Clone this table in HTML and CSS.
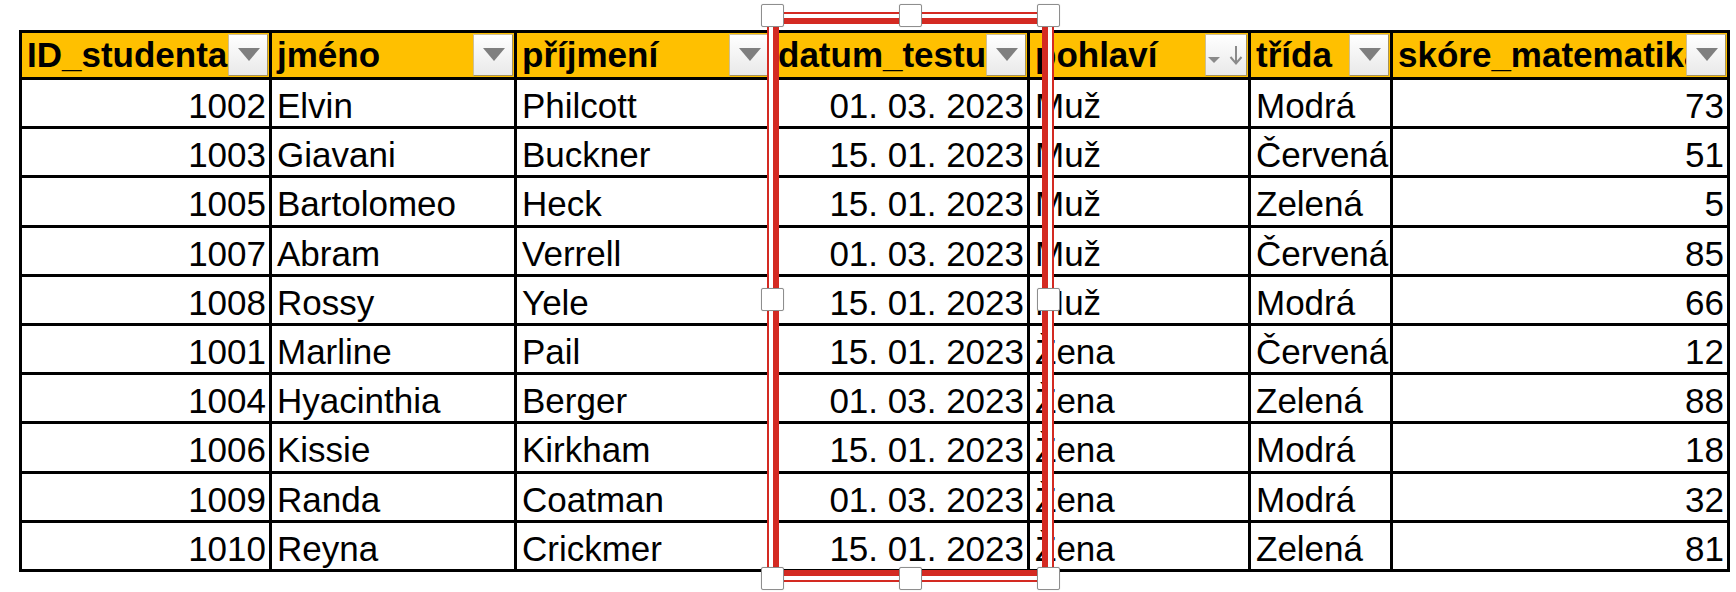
FILE: index.html
```html
<!DOCTYPE html>
<html lang="cs">
<head>
<meta charset="utf-8">
<title>Studenti</title>
<link rel="stylesheet" href="styles.css">
</head>
<body>
<div class="sheet">
  <div class="grid">
    <div class="hc">ID_studenta<span class="btn"><svg viewBox="0 0 40 41" width="40" height="41"><polygon points="10,14 32,14 21,27" fill="#7f7f7f"/></svg></span></div>
    <div class="hc">jméno<span class="btn"><svg viewBox="0 0 40 41" width="40" height="41"><polygon points="10,14 32,14 21,27" fill="#7f7f7f"/></svg></span></div>
    <div class="hc">příjmení<span class="btn"><svg viewBox="0 0 40 41" width="40" height="41"><polygon points="10,14 32,14 21,27" fill="#7f7f7f"/></svg></span></div>
    <div class="hc">datum_testu<span class="btn"><svg viewBox="0 0 40 41" width="40" height="41"><polygon points="10,14 32,14 21,27" fill="#7f7f7f"/></svg></span></div>
    <div class="hc">pohlaví<span class="btn btn-sort"><svg viewBox="0 0 42 41" width="42" height="41"><polygon points="3,23 15,23 9,29" fill="#8a8a8a"/><line x1="31" y1="12" x2="31" y2="29" stroke="#8a8a8a" stroke-width="2"/><polyline points="25.5,23 31,29.5 36.5,23" fill="none" stroke="#8a8a8a" stroke-width="2"/></svg></span></div>
    <div class="hc">třída<span class="btn"><svg viewBox="0 0 40 41" width="40" height="41"><polygon points="10,14 32,14 21,27" fill="#7f7f7f"/></svg></span></div>
    <div class="hc">skóre_matematika<span class="btn"><svg viewBox="0 0 40 41" width="40" height="41"><polygon points="10,14 32,14 21,27" fill="#7f7f7f"/></svg></span></div>

    <div class="c num">1002</div><div class="c">Elvin</div><div class="c">Philcott</div><div class="c num">01. 03. 2023</div><div class="c">Muž</div><div class="c">Modrá</div><div class="c num">73</div>
    <div class="c num">1003</div><div class="c">Giavani</div><div class="c">Buckner</div><div class="c num">15. 01. 2023</div><div class="c">Muž</div><div class="c">Červená</div><div class="c num">51</div>
    <div class="c num">1005</div><div class="c">Bartolomeo</div><div class="c">Heck</div><div class="c num">15. 01. 2023</div><div class="c">Muž</div><div class="c">Zelená</div><div class="c num">5</div>
    <div class="c num">1007</div><div class="c">Abram</div><div class="c">Verrell</div><div class="c num">01. 03. 2023</div><div class="c">Muž</div><div class="c">Červená</div><div class="c num">85</div>
    <div class="c num">1008</div><div class="c">Rossy</div><div class="c">Yele</div><div class="c num">15. 01. 2023</div><div class="c">Muž</div><div class="c">Modrá</div><div class="c num">66</div>
    <div class="c num">1001</div><div class="c">Marline</div><div class="c">Pail</div><div class="c num">15. 01. 2023</div><div class="c">Žena</div><div class="c">Červená</div><div class="c num">12</div>
    <div class="c num">1004</div><div class="c">Hyacinthia</div><div class="c">Berger</div><div class="c num">01. 03. 2023</div><div class="c">Žena</div><div class="c">Zelená</div><div class="c num">88</div>
    <div class="c num">1006</div><div class="c">Kissie</div><div class="c">Kirkham</div><div class="c num">15. 01. 2023</div><div class="c">Žena</div><div class="c">Modrá</div><div class="c num">18</div>
    <div class="c num">1009</div><div class="c">Randa</div><div class="c">Coatman</div><div class="c num">01. 03. 2023</div><div class="c">Žena</div><div class="c">Modrá</div><div class="c num">32</div>
    <div class="c num">1010</div><div class="c">Reyna</div><div class="c">Crickmer</div><div class="c num">15. 01. 2023</div><div class="c">Žena</div><div class="c">Zelená</div><div class="c num">81</div>
  </div>

  <div class="selection"></div>
  <span class="handle h-tl"></span>
  <span class="handle h-tm"></span>
  <span class="handle h-tr"></span>
  <span class="handle h-ml"></span>
  <span class="handle h-mr"></span>
  <span class="handle h-bl"></span>
  <span class="handle h-bm"></span>
  <span class="handle h-br"></span>
</div>
</body>
</html>
```

FILE: styles.css
```css
html, body {
  margin: 0;
  padding: 0;
  background: #fff;
}

.sheet {
  position: relative;
  width: 1736px;
  height: 592px;
  padding: 30px 0 0 19px;
  box-sizing: border-box;
  font-family: "Liberation Sans", Arial, sans-serif;
  color: #000;
}

.grid {
  display: grid;
  grid-template-columns: 247px 242px 253px 254px 218px 139px 334px;
  grid-template-rows: 44px repeat(10, 46.2px);
  gap: 3px;
  background: #000;
  border: 3px solid #000;
  width: max-content;
}

.hc {
  position: relative;
  background: #ffc000;
  font-weight: bold;
  font-size: 35px;
  line-height: 44px;
  padding-left: 5px;
  white-space: nowrap;
  overflow: hidden;
}

.btn {
  position: absolute;
  top: 1px;
  right: 1px;
  width: 40px;
  height: 42px;
  box-sizing: border-box;
  background: linear-gradient(#ffffff, #e9e9e9);
  border: 1px solid #cdbf96;
  border-right-color: #a5925d;
  border-bottom-color: #a5925d;
}

.btn svg {
  position: absolute;
  left: -1px;
  top: -1px;
  display: block;
}

.btn-sort {
  width: 42px;
}

.c {
  background: #fff;
  font-size: 35px;
  line-height: 46px;
  padding: 3px 5px 0;
  white-space: nowrap;
  overflow: hidden;
}

.num {
  text-align: right;
  padding: 3px 3px 0 0;
}

.selection {
  position: absolute;
  left: 773px;
  top: 18px;
  width: 275px;
  height: 558px;
  box-sizing: border-box;
  border: 6px solid #d42a22;
  box-shadow: 0 0 0 4px #fff, 0 0 0 6px #d42a22;
}

.handle {
  position: absolute;
  width: 23px;
  height: 23px;
  box-sizing: border-box;
  background: #fff;
  border: 1px solid #8e8e8e;
  border-radius: 2px;
  box-shadow: 0 0 1px rgba(0, 0, 0, 0.25);
}

.h-tl { left: 761px; top: 4px; }
.h-tm { left: 899px; top: 4px; }
.h-tr { left: 1037px; top: 4px; }
.h-ml { left: 761px; top: 288px; }
.h-mr { left: 1037px; top: 288px; }
.h-bl { left: 761px; top: 567px; }
.h-bm { left: 899px; top: 567px; }
.h-br { left: 1037px; top: 567px; }
```
